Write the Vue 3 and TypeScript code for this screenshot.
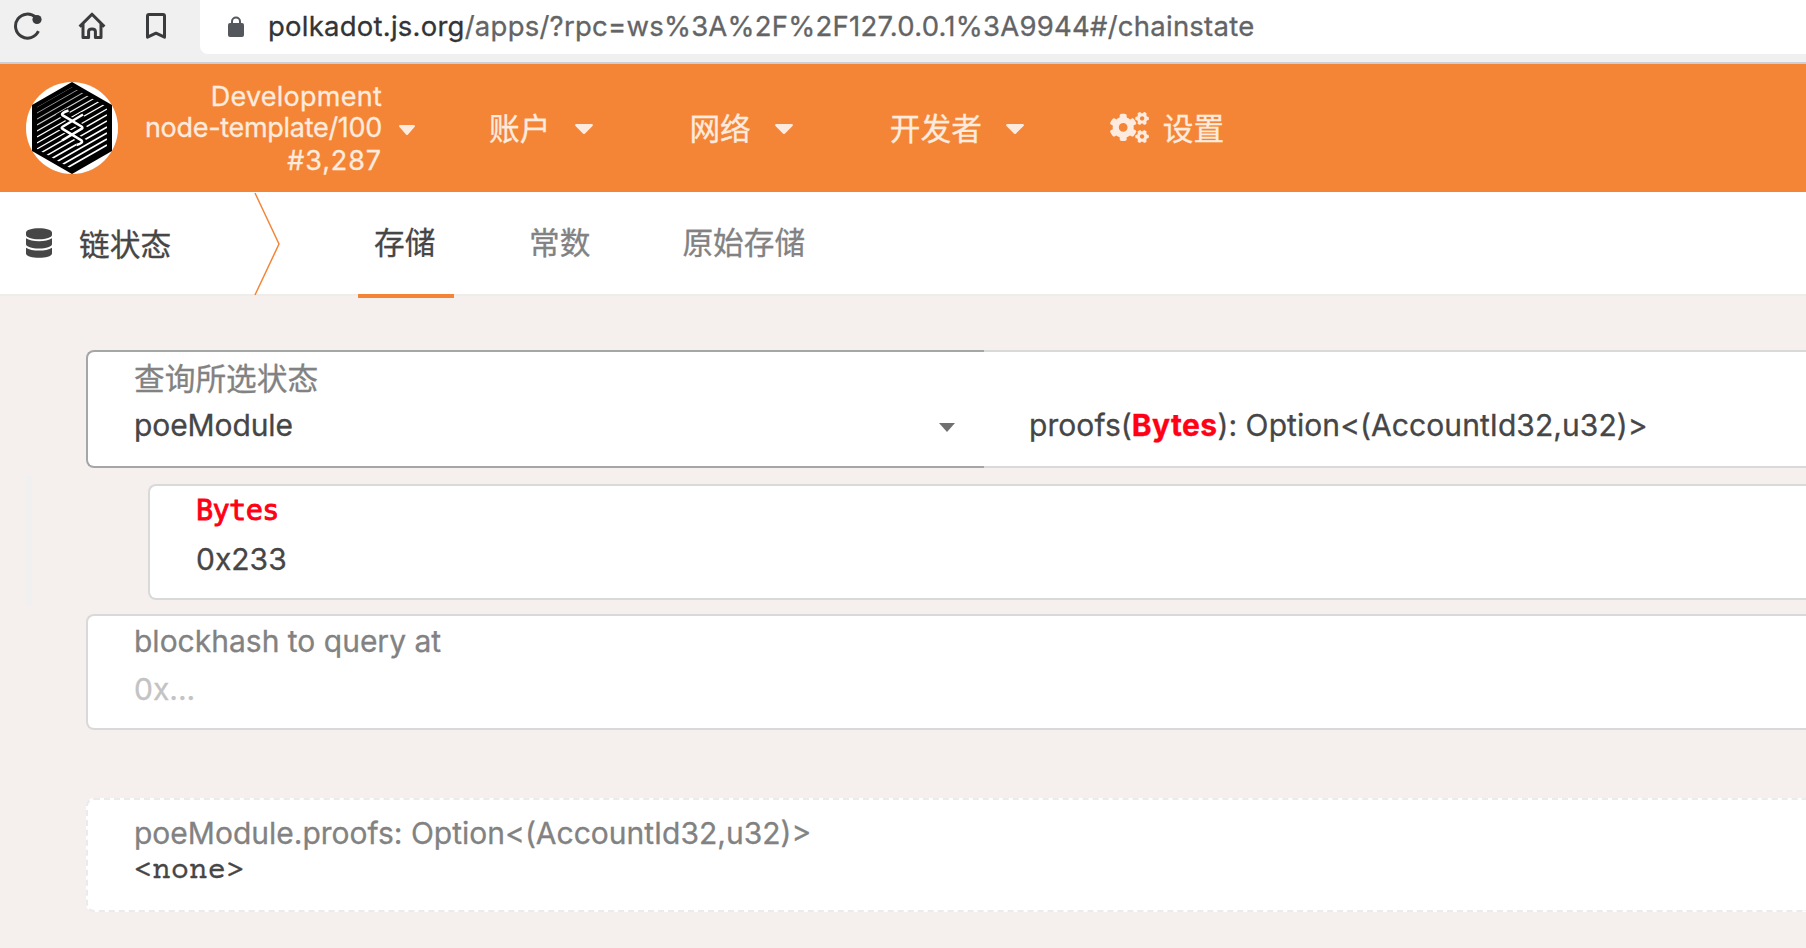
<script setup lang="ts">
interface NavItem {
  label: string
  cls: string
}

const nav: NavItem[] = [
  { label: '账户', cls: 'accounts' },
  { label: '网络', cls: 'network' },
  { label: '开发者', cls: 'developer' },
]

// Diagonal bands of the hexagonal logo, growing heavier towards the bottom
const stripes = Array.from({ length: 20 }, (_, i) => ({ y: -7 + i * 6, w: 0.8 + i * 0.065 }))
const caret = 'M31.3 192h257.3c17.8 0 26.7 21.5 14.1 34.1L174.1 354.8c-7.8 7.8-20.5 7.8-28.3 0L17.2 226.1C4.6 213.5 13.4 192 31.3 192z'
</script>

<template>
  <div class="page">
    <div class="browser">
      <svg class="tool reload" viewBox="0 0 28 28">
        <path d="M24.4 19.2A12 12 0 1 1 21.6 5.2" fill="none" stroke="#3a3b3d" stroke-width="3" />
        <circle cx="23" cy="7.500" r="4.600" fill="#3a3b3d" />
      </svg>
      <svg class="tool home" viewBox="0 0 28 28">
        <path d="M1.6 14.6 14 2.2l12.4 12.4M5 12v13.6h5.6v-6.2q0-2.4 3.4-2.4t3.4 2.4v6.2H23V12" fill="none" stroke="#3a3b3d" stroke-width="3" stroke-linejoin="round" />
      </svg>
      <svg class="tool mark" viewBox="0 0 20 26">
        <path d="M1.5 24.2V3q0-1.500 1.500-1.500h14q1.500 0 1.500 1.500v21.200L10 20.200z" fill="none" stroke="#3a3b3d" stroke-width="3" stroke-linejoin="round" />
      </svg>
      <div class="address">
        <svg class="lock" viewBox="0 0 16 21">
          <path d="M4 8V5.500a4 4 0 0 1 8 0V8" fill="none" stroke="#54575c" stroke-width="2" />
          <rect y="7" width="16" height="14" rx="2" fill="#54575c" />
        </svg>
        <span class="url"><span class="host">polkadot.js.org</span><span class="path">/apps/?rpc=ws%3A%2F%2F127.0.0.1%3A9944#/chainstate</span></span>
      </div>
    </div>

    <header class="header">
      <svg class="logo" viewBox="0 0 92 92">
        <defs>
          <clipPath id="hexInner"><path d="M46 5 81 25v42L46 87 11 67V25z" /></clipPath>
          <linearGradient id="fade" gradientUnits="userSpaceOnUse" x1="24" y1="8" x2="40" y2="36">
            <stop offset="0" stop-color="#fff" stop-opacity="0.25" />
            <stop offset="1" stop-color="#fff" />
          </linearGradient>
        </defs>
        <circle cx="46" cy="46" r="46" fill="#fff" />
        <path d="M46 0 86 23v46L46 92 6 69V23z" fill="#000" />
        <g clip-path="url(#hexInner)">
          <path v-for="s in stripes" :key="s.y" :d="`M11 ${s.y + 20}L81 ${s.y - 20}`" stroke="url(#fade)" :stroke-width="s.w" />
        </g>
        <path d="M42.500 28.500 35.700 32.500 56.500 45.500 36 58.500M57 32.500 35.700 45.700 56.500 59 50.500 63" fill="none" stroke="#000" stroke-width="6" />
        <path d="M42.500 28.500Q34.500 31 36.500 33.200L55.500 44.500Q57.500 46 55 47.200L36 58.500M57 32.500 37 44.500Q34.500 46 37 47.200L55.500 58.500Q57.500 61 50.500 63" fill="none" stroke="#fff" stroke-width="2.600" />
      </svg>
      <div class="chain">
        <div class="dev">Development</div>
        <div class="node">node-template/100</div>
        <div class="block">#3,287</div>
      </div>
      <svg class="caret small" viewBox="9 192 302 169" preserveAspectRatio="none"><path :d="caret" /></svg>
      <nav class="nav">
        <div v-for="n in nav" :key="n.cls" class="item" :class="n.cls">
          <span>{{ n.label }}</span>
          <svg class="caret" viewBox="9 192 302 169" preserveAspectRatio="none"><path :d="caret" /></svg>
        </div>
        <div class="item">
          <svg class="cogs" viewBox="0 0 640 512"><path d="M512.1 191l-8.2 14.3c-3 5.3-9.4 7.5-15.1 5.4-11.8-4.4-22.6-10.7-32.1-18.6-4.6-3.8-5.8-10.5-2.8-15.7l8.2-14.3c-6.9-8-12.3-17.3-15.9-27.4h-16.5c-6 0-11.2-4.3-12.2-10.3-2-12-2.1-24.6 0-37.1 1-6 6.2-10.4 12.2-10.4h16.5c3.6-10.1 9-19.4 15.9-27.4l-8.2-14.3c-3-5.2-1.9-11.9 2.8-15.7 9.5-7.9 20.4-14.2 32.1-18.6 5.7-2.1 12.1.1 15.1 5.4l8.2 14.3c10.5-1.9 21.2-1.9 31.7 0L552 6.3c3-5.3 9.4-7.5 15.1-5.4 11.8 4.4 22.6 10.7 32.1 18.6 4.6 3.8 5.8 10.5 2.8 15.7l-8.2 14.3c6.9 8 12.3 17.3 15.900 27.400h16.500c6 0 11.200 4.300 12.200 10.300 2 12 2.100 24.600 0 37.100-1 6-6.200 10.400-12.200 10.400h-16.500c-3.600 10.100-9 19.400-15.900 27.400l8.200 14.300c3 5.200 1.900 11.900-2.800 15.700-9.500 7.900-20.400 14.200-32.100 18.600-5.700 2.100-12.100-.1-15.100-5.400l-8.200-14.300c-10.400 1.900-21.200 1.900-31.700 0zm-10.500-58.800c38.500 29.600 82.400-14.300 52.800-52.800-38.500-29.700-82.400 14.300-52.800 52.800zM386.300 286.100l33.700 16.800c10.100 5.800 14.500 18.100 10.500 29.100-8.900 24.200-26.400 46.400-42.600 65.800-7.400 8.900-20.200 11.100-30.300 5.300l-29.100-16.800c-16 13.700-34.600 24.600-54.900 31.700v33.600c0 11.600-8.300 21.600-19.700 23.600-24.600 4.200-50.400 4.400-75.900 0-11.500-2-20-11.900-20-23.600V418c-20.300-7.200-38.900-18-54.900-31.700L74 403c-10 5.800-22.900 3.600-30.300-5.300-16.200-19.400-33.300-41.600-42.200-65.700-4-10.900.4-23.200 10.500-29.100l33.300-16.800c-3.900-20.900-3.900-42.400 0-63.400L12 205.800c-10.100-5.800-14.600-18.100-10.500-29 8.900-24.200 26-46.400 42.200-65.800 7.400-8.900 20.200-11.100 30.300-5.300l29.100 16.800c16-13.700 34.600-24.600 54.900-31.700V57.100c0-11.500 8.200-21.500 19.600-23.500 24.600-4.200 50.500-4.400 76-.1 11.500 2 20 11.900 20 23.600v33.600c20.300 7.200 38.900 18 54.900 31.700l29.100-16.800c10-5.800 22.900-3.600 30.300 5.300 16.200 19.400 33.200 41.600 42.100 65.800 4 10.900.1 23.200-10 29.100l-33.700 16.800c3.900 21 3.900 42.500 0 63.500zm-117.600 21.100c59.200-77-28.700-164.900-105.700-105.700-59.200 77 28.700 164.900 105.700 105.700zm243.400 182.700l-8.200 14.300c-3 5.300-9.400 7.500-15.100 5.400-11.800-4.400-22.600-10.700-32.100-18.600-4.600-3.800-5.800-10.500-2.800-15.700l8.200-14.300c-6.900-8-12.300-17.300-15.900-27.400h-16.500c-6 0-11.200-4.300-12.200-10.300-2-12-2.100-24.600 0-37.100 1-6 6.200-10.400 12.200-10.400h16.500c3.600-10.100 9-19.400 15.900-27.400l-8.200-14.300c-3-5.200-1.900-11.900 2.800-15.700 9.500-7.900 20.400-14.200 32.100-18.600 5.700-2.100 12.100.1 15.100 5.400l8.200 14.300c10.500-1.900 21.200-1.900 31.700 0l8.200-14.300c3-5.300 9.400-7.500 15.100-5.400 11.800 4.400 22.600 10.700 32.100 18.600 4.600 3.800 5.800 10.500 2.800 15.700l-8.200 14.300c6.900 8 12.300 17.300 15.900 27.400h16.500c6 0 11.200 4.300 12.200 10.300 2 12 2.100 24.600 0 37.100-1 6-6.200 10.400-12.200 10.400h-16.500c-3.600 10.100-9 19.400-15.900 27.400l8.200 14.300c3 5.200 1.900 11.900-2.800 15.700-9.500 7.900-20.400 14.200-32.100 18.600-5.700 2.100-12.100-.1-15.100-5.400l-8.200-14.300c-10.400 1.900-21.200 1.900-31.700 0zM501.600 431c38.500 29.600 82.400-14.300 52.800-52.800-38.500-29.600-82.400 14.300-52.800 52.800z" /></svg>
          <span>设置</span>
        </div>
      </nav>
    </header>

    <div class="tabs">
      <svg class="db" viewBox="0 0 448 512"><path d="M448 73.143v45.714C448 159.143 347.667 192 224 192S0 159.143 0 118.857V73.143C0 32.857 100.333 0 224 0s224 32.857 224 73.143zM448 176v102.857C448 319.143 347.667 352 224 352S0 319.143 0 278.857V176c48.125 33.143 136.208 48.572 224 48.572S399.874 209.143 448 176zm0 160v102.857C448 479.143 347.667 512 224 512S0 479.143 0 438.857V336c48.125 33.143 136.208 48.572 224 48.572S399.874 369.143 448 336z" /></svg>
      <h1 class="title">链状态</h1>
      <svg class="divider" viewBox="0 0 26 104"><path d="M1 1 25 52 1 103" /></svg>
      <div class="tab active">存储</div>
      <div class="tab">常数</div>
      <div class="tab">原始存储</div>
    </div>

    <main class="main">
      <div class="query">
        <div class="field module">
          <label class="cjk">查询所选状态</label>
          <div class="value"><span class="name">poeModule</span><svg class="arrow" viewBox="0 0 16 9"><path d="M0 0h16L8 9z" /></svg></div>
        </div>
        <div class="field call">
          <div class="value"><span>proofs(</span><b>Bytes</b><span>): Option&lt;(AccountId32,u32)&gt;</span></div>
        </div>
      </div>
      <div class="params">
        <div class="field box">
          <label class="type">Bytes</label>
          <div class="value">0x233</div>
        </div>
      </div>
      <div class="field box hash">
        <label>blockhash to query at</label>
        <div class="value ph">0x...</div>
      </div>
      <div class="result">
        <label>poeModule.proofs: Option&lt;(AccountId32,u32)&gt;</label>
        <pre class="none">&lt;none&gt;</pre>
      </div>
    </main>
  </div>
</template>

<style scoped>
.page {
  width: 100%;
  height: 948px;
  overflow: hidden;
  background: #f5f0ed;
  color: #464646;
  font-family: Inter, "Noto Sans CJK SC", sans-serif;
  font-size: 30px;
  -webkit-text-stroke-width: 0.300px;
}
.page svg { display: block; flex: none; }
.browser {
  box-sizing: border-box;
  height: 64px;
  background: #f0f0f0;
  border-bottom: 2px solid #ccd0d4;
  display: flex;
}
.reload { width: 28px; height: 28px; margin: 12px 0 0 14px; }
.home { width: 28px; height: 28px; margin: 12px 0 0 36px; }
.mark { width: 20px; height: 26px; margin: 13px 0 0 40px; }
.address {
  flex: 1;
  height: 54px;
  margin-left: 34px;
  background: #fff;
  border-radius: 0 0 0 8px;
  display: flex;
}
.lock { width: 16px; height: 21px; margin: 16px 0 0 28px; }
.url { margin-left: 24px; font-size: 27.500px; line-height: 52px; letter-spacing: 0.240px; white-space: nowrap; color: #636466; }
.host { color: #333436; }

.header { height: 128px; background: #f58536; color: #fdebdf; display: flex; }
.header svg { fill: currentColor; }
.logo { width: 92px; height: 92px; margin: 18px 0 0 26px; }
.chain {
  width: 264px;
  padding-top: 17px;
  font-size: 27px;
  line-height: 32px;
  text-align: right;
  white-space: nowrap;
}
.dev { letter-spacing: 0.250px; }
.node { line-height: 29px; letter-spacing: -0.300px; }
.block { line-height: 37px; letter-spacing: 0.900px; }
.caret { width: 18px; height: 10px; margin: 60px 0 0 25px; }
.caret.small { width: 16px; margin: 61px 0 0 17px; }
.nav { display: flex; font-family: "Noto Sans CJK SC", sans-serif; font-size: 30.700px; line-height: 126px; white-space: nowrap; }
.item { display: flex; }
.accounts { margin-left: 74px; }
.network, .developer { margin-left: 96px; }
.network .caret { margin: 60px 1px 0 24px; }
.developer .caret { margin-left: 24px; }
.cogs { width: 39px; height: 31px; margin: 48px 14px 0 86px; }

.tabs {
  box-sizing: border-box;
  height: 104px;
  background: #fff;
  border-bottom: 2px solid #efedea;
  display: flex;
  font-family: "Noto Sans CJK SC", sans-serif;
  font-size: 30.700px;
  white-space: nowrap;
}
.db { width: 26px; height: 30px; margin: 36px 0 0 26px; fill: #464646; }
.title { width: 175px; margin: 0 0 0 27px; font-size: inherit; font-weight: 400; line-height: 102px; }
.divider { width: 26px; height: 104px; }
.divider path { fill: none; stroke: #f58536; stroke-width: 1.500; }
.tab { height: 102px; padding: 0 46px; color: #828282; line-height: 98px; }
.tab.active {
  box-sizing: border-box;
  width: 96px;
  height: 106px;
  margin: 0 29px 0 78px;
  padding: 0 0 0 16px;
  border-bottom: 4px solid #f58536;
  color: #464646;
}

.main { padding: 54px 0 0 86px; white-space: nowrap; }
.query { display: flex; height: 118px; }
.field { box-sizing: border-box; background: #fff; border: 2px solid #d9d9d9; border-right: 0; }
.module { width: 898px; border-color: #a5a7a6; border-radius: 8px 0 0 8px; padding: 6px 0 0 46px; }
.call { flex: 1; border-left: 0; padding: 48px 0 0 45px; }
.call .value { letter-spacing: 0.070px; }
label { display: block; height: 38px; line-height: 38px; color: #828282; }
.cjk { font-family: "Noto Sans CJK SC", sans-serif; font-size: 30.700px; }
.value { display: flex; height: 50px; line-height: 50px; }
.field label + .value { margin-top: 4px; }
.name { letter-spacing: -0.100px; }
.arrow { width: 16px; height: 9px; margin: 23px 0 0 auto; fill: #707070; }
.module .value { padding-right: 29px; }
.value b { color: #ff0014; font-weight: 700; letter-spacing: 0.350px; }
.params { height: 130px; margin: 8px 0 8px -60px; padding: 8px 0 0 116px; border-left: 6px solid #f0f0f0; box-sizing: border-box; }
.box { height: 116px; border-radius: 8px 0 0 8px; padding: 6px 0 0 46px; }
.type { color: #ff0014; font-family: "DejaVu Sans Mono", monospace; font-size: 28.500px; letter-spacing: -0.600px; -webkit-text-stroke: 0.900px #ff0014; }
.ph { color: #c3c3c3; }
.result {
  box-sizing: border-box;
  height: 114px;
  margin-top: 68px;
  padding: 14px 0 0 46px;
  background: #fff;
  border: 2px dashed #ebebeb;
  border-right: 0;
  border-radius: 8px 0 0 8px;
}
.none { margin: 0; font-family: "Courier Prime", "Liberation Mono", monospace; font-size: 30.600px; line-height: 38px; }
</style>

<style>
body { margin: 0; overflow: hidden; }
</style>
